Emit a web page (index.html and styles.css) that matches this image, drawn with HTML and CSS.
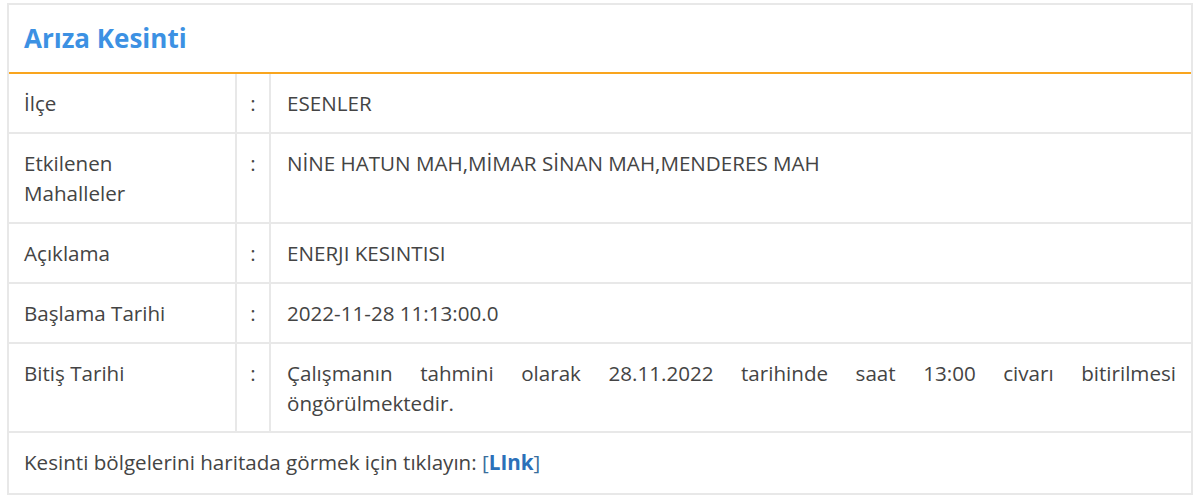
FILE: index.html
```html
<!DOCTYPE html>
<html lang="tr">
<head>
    <meta charset="UTF-8">
    <meta name="viewport" content="width=device-width, initial-scale=1.0">
    <title>Arıza Kesinti</title>
    <link rel="stylesheet" href="styles.css">
</head>
<body>
    <div class="panel">
        <div class="panel-head">
            <h2>Arıza Kesinti</h2>
        </div>
        <table class="info">
            <tr>
                <td class="label">İlçe</td>
                <td class="sep">:</td>
                <td class="value">ESENLER</td>
            </tr>
            <tr>
                <td class="label">Etkilenen<br>Mahalleler</td>
                <td class="sep">:</td>
                <td class="value">NİNE HATUN MAH,MİMAR SİNAN MAH,MENDERES MAH</td>
            </tr>
            <tr>
                <td class="label">Açıklama</td>
                <td class="sep">:</td>
                <td class="value">ENERJI KESINTISI</td>
            </tr>
            <tr>
                <td class="label">Başlama Tarihi</td>
                <td class="sep">:</td>
                <td class="value">2022-11-28 11:13:00.0</td>
            </tr>
            <tr>
                <td class="label">Bitiş Tarihi</td>
                <td class="sep">:</td>
                <td class="value wide">Çalışmanın tahmini olarak 28.11.2022 tarihinde saat 13:00 civarı bitirilmesi öngörülmektedir.</td>
            </tr>
            <tr>
                <td class="foot" colspan="3">Kesinti bölgelerini haritada görmek için tıklayın: <a href="#">[<b>LInk</b>]</a></td>
            </tr>
        </table>
    </div>
</body>
</html>
```

FILE: styles.css
```css
body {
    margin: 0;
    background: #fff;
    font-family: "Open Sans", "Noto Sans", sans-serif;
    color: #444;
    font-size: 20.6px;
}

.panel {
    margin: 3px 0 0 7px;
    width: 1182px;
    border: 2px solid #e8e8e8;
    border-bottom: none;
}

.panel-head {
    height: 67px;
    border-bottom: 2px solid #f9a51e;
    display: flex;
    align-items: center;
    padding-left: 15px;
}

.panel-head h2 {
    margin: 0;
    font-size: 26px;
    font-weight: 700;
    color: #3c91e3;
    padding-bottom: 2px;
}

.info {
    width: 100%;
    border-collapse: collapse;
}

.info td {
    border: 2px solid #e8e8e8;
    padding: 14px 15px;
    line-height: 30px;
    vertical-align: top;
}

.info tr:first-child td {
    border-top: none;
}

.info td:first-child {
    border-left: none;
}

.info td:last-child {
    border-right: none;
}

.label {
    width: 196px;
}

.sep {
    width: 32px;
    padding: 14px 0 !important;
    text-align: center;
}

.value {
    padding-left: 16px !important;
    text-align: justify;
}

/* long text wraps onto a second line like the original */
.value.wide {
    word-spacing: 3px;
    padding-bottom: 13px !important;
}

.foot {
    padding-bottom: 16px !important;
}

.foot a {
    color: #3a6e9c;
    text-decoration: none;
}

.foot a b {
    color: #2b70b9;
}
```
